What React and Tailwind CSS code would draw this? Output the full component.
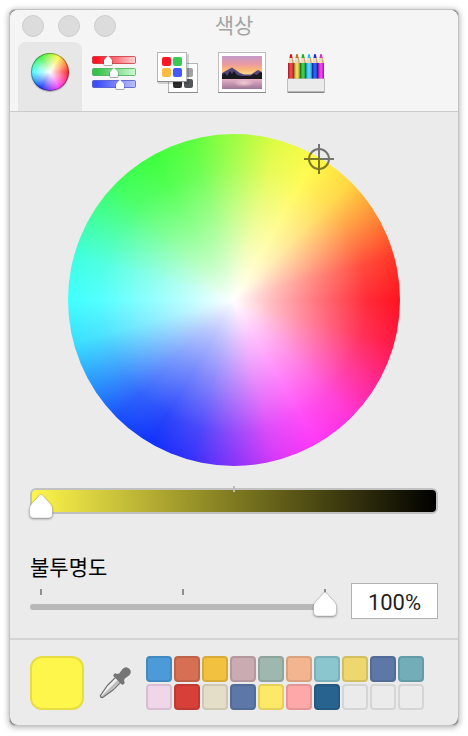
import React, { useState } from 'react';

const SWATCHES = [
  { fill: '#4c9ad8', edge: '#428abf' },
  { fill: '#d66f53', edge: '#bf6249' },
  { fill: '#f2c140', edge: '#d9ac37' },
  { fill: '#caabb1', edge: '#b4989e' },
  { fill: '#9fb8af', edge: '#8ea59c' },
  { fill: '#f2b58f', edge: '#d9a17e' },
  { fill: '#8bc5cd', edge: '#7ab1b9' },
  { fill: '#edd76e', edge: '#d4bf60' },
  { fill: '#5d77a6', edge: '#526b97' },
  { fill: '#72adb8', edge: '#639ba6' },
  { fill: '#efd6e8', edge: '#d7bfd1' },
  { fill: '#d64038', edge: '#bf3831' },
  { fill: '#e4dec9', edge: '#cdc7b3' },
  { fill: '#5d77a6', edge: '#526b97' },
  { fill: '#fee868', edge: '#e4cf5b' },
  { fill: '#fea8a9', edge: '#e49596' },
  { fill: '#286390', edge: '#235880' },
  { fill: '#ebebeb', edge: '#d5d5d5' },
  { fill: '#ebebeb', edge: '#d5d5d5' },
  { fill: '#ebebeb', edge: '#d5d5d5' },
];

const PENCILS = [
  { dark: '#8e1c22', mid: '#f0444e', tip: '#cf1820' },
  { dark: '#94791d', mid: '#eed95a', tip: '#b07a1e' },
  { dark: '#12641a', mid: '#3fca47', tip: '#1fae2c' },
  { dark: '#1b86b8', mid: '#55d3fb', tip: '#2fbcf2' },
  { dark: '#0c1c86', mid: '#2a62f5', tip: '#1a2fd6' },
  { dark: '#8a128a', mid: '#f23df0', tip: '#d52fd6' },
];

// --- TOOLBAR ICONS ---
const WheelIcon = () => (
  <span className="w-[38px] h-[38px] mt-[11px] rounded-full border border-black/35 bg-[radial-gradient(closest-side,#fff,transparent),conic-gradient(from_30deg,#fff645,#ff1a20_60deg,#ff38f8_120deg,#1030fa_180deg,#40ffff_240deg,#3cf03c_300deg,#fff645)] bg-origin-border shadow-[0_1px_1px_rgba(0,0,0,0.25)]" />
);

const SlidersIcon = () => {
  const bars = [
    { id: 'r', y: 14, x: 26, from: '#ff1220', to: '#ffd3d6', edge: '#c41c26' },
    { id: 'g', y: 26, x: 32, from: '#37c04b', to: '#cffad3', edge: '#37a546' },
    { id: 'b', y: 38, x: 38, from: '#3c4dfa', to: '#bdc0fb', edge: '#3c46c0' },
  ];
  return (
    <svg width="64" height="68" viewBox="0 0 64 68">
      <defs>
        {bars.map((b) => (
          <linearGradient key={b.id} id={`bar-${b.id}`}>
            <stop offset="0.1" stopColor={b.from} />
            <stop offset="1" stopColor={b.to} />
          </linearGradient>
        ))}
      </defs>
      {bars.map((b) => (
        <g key={b.id}>
          <rect x="10.5" y={b.y + 0.5} width="43" height="7" rx="1" fill={`url(#bar-${b.id})`} stroke={b.edge} strokeOpacity="0.7" />
          <g transform={`translate(${b.x} ${b.y})`}>
            <path d="M0 0 L4.5 4 V8.5 Q4.5 10 3 10 H-3 Q-4.5 10 -4.5 8.5 V4 Z" fill="#000" opacity="0.3" />
            <path d="M-0.7 0.3 Q0 -0.3 0.7 0.3 L4 4 V8 Q4 9 3 9 H-3 Q-4 9 -4 8 V4 Z" fill="#fff" />
          </g>
        </g>
      ))}
    </svg>
  );
};

const PalettesIcon = () => (
  <svg width="64" height="68" viewBox="0 0 64 68">
    <rect x="22.5" y="21.5" width="29" height="29" fill="#fff" stroke="#b4b4b4" />
    <path d="M22 50.5 H52" stroke="#8a8a8a" />
    <rect x="38" y="26" width="9" height="9" rx="2" fill="#a0a1a4" />
    <rect x="27" y="37" width="9" height="9" rx="2" fill="#2c2c2e" />
    <rect x="38" y="37" width="9" height="9" rx="2" fill="#55565a" />
    <rect x="12" y="12" width="31" height="30" fill="#000" opacity="0.15" />
    <rect x="11.5" y="10.5" width="29" height="29" fill="#fff" stroke="#b4b4b4" />
    <path d="M11 39.5 H41" stroke="#8a8a8a" />
    <rect x="16" y="15" width="9" height="9" rx="2" fill="#ff1525" />
    <rect x="27" y="15" width="9" height="9" rx="2" fill="#3cc94f" />
    <rect x="16" y="26" width="9" height="9" rx="2" fill="#fdbc40" />
    <rect x="27" y="26" width="9" height="9" rx="2" fill="#4656fc" />
  </svg>
);

const ImageIcon = () => (
  <svg width="64" height="68" viewBox="0 0 64 68">
    <defs>
      <linearGradient id="sky" x1="0" y1="0" x2="0" y2="1">
        <stop offset="0" stopColor="#c49acb" />
        <stop offset="0.4" stopColor="#e99aa2" />
        <stop offset="0.7" stopColor="#fbb877" />
        <stop offset="1" stopColor="#fee498" />
      </linearGradient>
      <linearGradient id="lake" x1="0" y1="0" x2="0" y2="1">
        <stop offset="0" stopColor="#eab0c6" />
        <stop offset="1" stopColor="#9c7698" />
      </linearGradient>
      <radialGradient id="glow">
        <stop offset="0" stopColor="#fbd9da" stopOpacity="0.8" />
        <stop offset="1" stopColor="#fbd9da" stopOpacity="0" />
      </radialGradient>
    </defs>
    <rect x="8.5" y="10.5" width="47" height="40" fill="#fff" stroke="#bcbcbc" />
    <path d="M8 50.5 H56" stroke="#8a8a8a" />
    <rect x="12" y="14" width="40" height="20" fill="url(#sky)" />
    <path d="M12 31 L22 25.5 L30 31 L34 32.5 H41 L48 28 L52 30 V37 H12 Z" fill="#534579" />
    <path d="M12 33 L15 31 L17 34 L20 29 L22 32 L24 29 L27 33 L32 34 H40 L44 32 L47 33 L50 30 L52 31 V37 H12 Z" fill="#19181d" />
    <rect x="12" y="37" width="40" height="10" fill="url(#lake)" />
    <ellipse cx="34" cy="41" rx="11" ry="4" fill="url(#glow)" />
  </svg>
);

const PencilsIcon = () => (
  <svg width="64" height="68" viewBox="0 0 64 68">
    <defs>
      {PENCILS.map((p, i) => (
        <linearGradient key={i} id={`pencil-${i}`}>
          <stop offset="0" stopColor={p.dark} />
          <stop offset="0.35" stopColor={p.mid} />
          <stop offset="0.65" stopColor={p.mid} />
          <stop offset="1" stopColor={p.dark} />
        </linearGradient>
      ))}
    </defs>
    {PENCILS.map((p, i) => (
      <g key={i} transform={`translate(${14 + i * 6} 12)`}>
        <path d="M0 9.5 L1.5 3 H4.5 L6 9.5 Z" fill="#f1dcb8" />
        <path d="M3.6 3 H4.5 L6 9.5 H4.4 Z" fill="#cda87c" />
        <path d="M1.5 4 L2 0.5 Q3 -0.3 4 0.5 L4.5 4 Z" fill={p.tip} />
        <path d="M0 9 H6 V25 H0 Z" fill={`url(#pencil-${i})`} />
      </g>
    ))}
    <rect x="13.5" y="37" width="37" height="13.5" fill="#ebebeb" stroke="#bdbdbd" />
    <path d="M14 37.5 H50" stroke="#ebebeb" />
    <path d="M14 49.5 H50" stroke="#b5b5b5" />
    <path d="M14 50.5 H50" stroke="#858585" />
  </svg>
);

const DropperIcon = () => (
  <svg width="32" height="34" viewBox="0 0 32 34">
    <defs>
      <linearGradient id="glass">
        <stop offset="0" stopColor="#fff" />
        <stop offset="0.45" stopColor="#e8e8e8" />
        <stop offset="0.55" stopColor="#b5b5b5" />
        <stop offset="1" stopColor="#d0d0d0" />
      </linearGradient>
    </defs>
    <g transform="translate(2 31) rotate(45)">
      <path d="M-1.5 -0.5 Q0 0.8 1.5 -0.5 L3.6 -13 V-25 H-3.6 V-13 Z" fill="url(#glass)" stroke="#6f6f6f" strokeWidth="1.2" />
      <path d="M-5 -23.5 Q-7 -23.5 -7 -25.5 Q-7 -27.5 -5 -27.5 L-3.8 -29.5 L-4.6 -35 Q-4.6 -40 0 -40 Q4.6 -40 4.6 -35 L3.8 -29.5 L5 -27.5 Q7 -27.5 7 -25.5 Q7 -23.5 5 -23.5 Z" fill="#757575" />
    </g>
  </svg>
);

const TABS = [
  { id: 'wheel', label: '색상환', Icon: WheelIcon },
  { id: 'sliders', label: '색상 슬라이더', Icon: SlidersIcon },
  { id: 'palettes', label: '색상 팔레트', Icon: PalettesIcon },
  { id: 'image', label: '이미지 팔레트', Icon: ImageIcon },
  { id: 'pencils', label: '연필', Icon: PencilsIcon },
];

// --- CONTROLS ---
const Thumb = ({ value }) => (
  <span
    className="absolute inset-y-0 flex items-end -translate-x-1/2 pointer-events-none"
    style={{ left: `calc(11px + (100% - 22px) * ${value / 100})` }}
  >
    <svg width="26" height="27" viewBox="0 0 26 27" className="drop-shadow-[0_1px_1px_rgba(0,0,0,0.35)]">
      <path
        d="M12 1.6 Q13 0.6 14 1.6 L22.5 11 Q24.5 13.2 24.5 15.5 V21 Q24.5 25 20.5 25 H5.5 Q1.5 25 1.5 21 V15.5 Q1.5 13.2 3.5 11 Z"
        fill="#fff"
        stroke="#000"
        strokeOpacity="0.18"
        strokeWidth="0.8"
      />
    </svg>
  </span>
);

const RangeInput = ({ label, value, onChange }) => (
  <input
    type="range"
    min="0"
    max="100"
    aria-label={label}
    value={value}
    onChange={(e) => onChange(Number(e.target.value))}
    className="absolute inset-0 w-full h-full m-0 opacity-0 cursor-pointer"
  />
);

export default function ColorPanel() {
  const [tab, setTab] = useState('wheel');
  const [marker, setMarker] = useState({ x: 75.6, y: 7.5 });
  const [darkness, setDarkness] = useState(0);
  const [opacity, setOpacity] = useState(100);
  const [color, setColor] = useState({ fill: '#fff64c', edge: '#e6dd43' });

  const pickColor = (e) => {
    const box = e.currentTarget.getBoundingClientRect();
    setMarker({
      x: ((e.clientX - box.left) / box.width) * 100,
      y: ((e.clientY - box.top) / box.height) * 100,
    });
  };

  return (
    <div className="min-h-screen bg-white p-[9px] font-['Roboto','Noto_Sans_CJK_KR',sans-serif]">
      <div className="rounded-md border border-[#c3c3c3] bg-[#858585] shadow-[0_1px_6px_rgba(0,0,0,0.35)]">
        <div className="rounded-lg overflow-hidden bg-[#ebebeb]">
          <header className="bg-[#f5f5f5] border-b border-[#cbcbcb]">
            <div className="grid grid-cols-3 items-center h-8 px-3">
              <div className="flex gap-[14px]">
                <button aria-label="닫기" className="w-[22px] h-[22px] rounded-full bg-[#dcdcdc] border border-[#cdcdcd]" />
                <button aria-label="최소화" className="w-[22px] h-[22px] rounded-full bg-[#dcdcdc] border border-[#cdcdcd]" />
                <button aria-label="확대" className="w-[22px] h-[22px] rounded-full bg-[#dcdcdc] border border-[#cdcdcd]" />
              </div>
              <h1 className="text-center text-[21px] leading-8 text-[#a4a4a4]">색상</h1>
            </div>
            <nav className="flex px-2">
              {TABS.map(({ id, label, Icon }) => (
                <button
                  key={id}
                  aria-label={label}
                  aria-pressed={tab === id}
                  onClick={() => setTab(id)}
                  className={`flex w-16 h-[69px] items-start justify-center rounded-t-lg ${tab === id ? 'bg-[#e7e7e7]' : ''}`}
                >
                  <Icon />
                </button>
              ))}
            </nav>
          </header>

          <main className="px-5 pt-[22px] pb-[19px]">
            <div
              onClick={pickColor}
              className="relative w-full max-w-[332px] aspect-square mx-auto rounded-full bg-[radial-gradient(closest-side,#fff,rgba(255,255,255,0.69)_25%,rgba(255,255,255,0.42)_50%,rgba(255,255,255,0.11)_80%,rgba(255,255,255,0)),conic-gradient(from_30deg,#fffa45,#ffd63f_15deg,#ff3626_45deg,#ff1220_60deg,#ff1842_75deg,#ff32d6_105deg,#ff38f8_120deg,#da37f8_135deg,#3531fa_165deg,#1030fa_180deg,#1850fb_195deg,#39dffe_225deg,#40ffff_240deg,#3fffe1_255deg,#3dff5a_285deg,#3cff3c_300deg,#5afe3d_315deg,#e1fb44_345deg,#fffa45)]"
            >
              <svg
                width="30"
                height="30"
                viewBox="0 0 30 30"
                className="absolute -translate-x-1/2 -translate-y-1/2 opacity-50"
                style={{ left: `${marker.x}%`, top: `${marker.y}%` }}
              >
                <circle cx="15" cy="15" r="10" fill="none" stroke="#000" strokeWidth="2" />
                <path d="M15 0 V30 M0 15 H30" stroke="#000" strokeWidth="2" />
              </svg>
            </div>

            <div className="relative mt-[22px] h-[26px] rounded-md border-2 border-[#c1c1c1] bg-[linear-gradient(to_right,#fff64c,#7f7a20,#000)]">
              <span className="absolute -top-1 left-1/2 -translate-x-1/2 w-[2px] h-[6px] bg-[#bababa]" />
              <div className="absolute -inset-x-[2px] top-1 -bottom-2">
                <Thumb value={darkness} />
                <RangeInput label="밝기" value={darkness} onChange={setDarkness} />
              </div>
            </div>

            <label htmlFor="opacity" className="block mt-[42px] mb-[3px] text-[21px] leading-6 text-black">
              불투명도
            </label>
            <div className="flex items-center gap-[15px]">
              <div className="relative flex-1 h-9">
                <div className="flex justify-between px-[10px] pt-[6px]">
                  <span className="w-[2px] h-[6px] bg-[#8f8f8f]" />
                  <span className="w-[2px] h-[6px] bg-[#8f8f8f]" />
                  <span className="w-[2px] h-[6px] bg-[#8f8f8f]" />
                </div>
                <div className="mt-[9px] h-[6px] rounded-full bg-[#b8b8b8]" />
                <div className="absolute inset-x-0 top-2 bottom-px">
                  <Thumb value={opacity} />
                  <RangeInput label="불투명도 슬라이더" value={opacity} onChange={setOpacity} />
                </div>
              </div>
              <input
                id="opacity"
                type="text"
                value={`${opacity}%`}
                onChange={(e) => setOpacity(Math.min(100, parseInt(e.target.value, 10) || 0))}
                className="w-[87px] h-9 border border-[#b1b1b1] bg-white pt-[2px] text-center text-[22px] leading-8 text-[#1f1f1f] focus:outline-none"
              />
            </div>
          </main>

          <footer className="flex items-center border-t-2 border-[#d4d4d4] px-5 pt-4 pb-[15px]">
            <button
              aria-label="현재 색상"
              className="w-[54px] h-[54px] rounded-xl border-2"
              style={{ backgroundColor: color.fill, borderColor: color.edge }}
            />
            <button aria-label="스포이트" className="ml-[15px] mr-[15px]">
              <DropperIcon />
            </button>
            <div className="grid grid-cols-10 gap-[2px]">
              {SWATCHES.map((s, i) => (
                <button
                  key={i}
                  aria-label={`색상 견본 ${i + 1}`}
                  onClick={() => setColor(s)}
                  className="w-[26px] h-[26px] rounded-[4px] border-2"
                  style={{ backgroundColor: s.fill, borderColor: s.edge }}
                />
              ))}
            </div>
          </footer>
        </div>
      </div>
    </div>
  );
}
